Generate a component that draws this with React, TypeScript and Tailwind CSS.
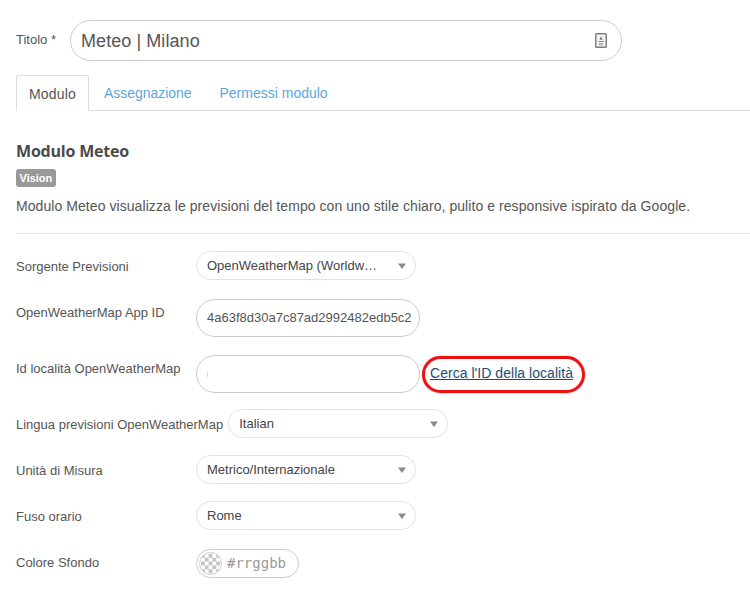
import React from "react";

function Caret() {
  return (
    <svg width="8" height="6" viewBox="0 0 8 6" className="absolute right-[9px] top-[11px]">
      <path d="M0 0.5h8L4 6z" fill="#8a8a8a" />
    </svg>
  );
}

function Select({ text, width }: { text: string; width: string }) {
  return (
    <div className={`relative h-[29px] ${width} shrink-0 rounded-[15px] border border-[#e2e2e2] bg-white pl-[10px] text-[13px] leading-[28px] text-[#444]`}>
      {text}
      <Caret />
    </div>
  );
}

function Label({ text, top }: { text: string; top: string }) {
  return (
    <div className={`min-w-[180px] pr-[5px] ${top} text-[13px] leading-[18px] text-[#555] whitespace-nowrap`}>{text}</div>
  );
}

function Row({ mt, children }: { mt: string; children: React.ReactNode }) {
  return <div className={`flex items-start ${mt}`}>{children}</div>;
}

function Checker() {
  const cells = [];
  for (let y = 0; y < 5; y++) {
    for (let x = 0; x < 5; x++) {
      if ((x + y) % 2 === 0) cells.push(<rect key={`${x}-${y}`} x={1 + x * 4} y={1 + y * 4} width="4" height="4" fill="#c4c4c4" />);
    }
  }
  return (
    <svg width="23" height="23" viewBox="0 0 22 22" className="shrink-0 rounded-full border border-[#ccc] bg-white">
      {cells}
    </svg>
  );
}

export default function App() {
  return (
    <div className="h-[590px] w-[750px] overflow-hidden bg-white font-['Liberation_Sans',Arial,sans-serif]">
      <div className="flex items-start pl-4 pt-5">
        <div className="w-[54px] pt-[11px] text-[13px] leading-[18px] text-[#555]">Titolo *</div>
        <div className="flex h-[41px] w-[552px] items-center justify-between rounded-[21px] border border-[#ccc] pl-[10px] pr-[14px] text-[18px] text-[#555]">
          <span className="pt-[2px] tracking-[0.07px]">Meteo | Milano</span>
          <svg width="12" height="15" viewBox="0 0 12 15">
            <rect x="0.75" y="0.75" width="10.5" height="13.5" rx="0.8" fill="#f4f4f4" stroke="#808080" strokeWidth="1.5" />
            <path d="M6 3.2l1.6 3.6H4.4z" fill="#777" />
            <path d="M3.2 8h5.6v1H3.2z" fill="#888" />
            <path d="M3.8 10h4.4v2.4H3.8z" fill="#b5b5b5" />
          </svg>
        </div>
      </div>

      <div className="mt-[14px] ml-4 flex h-[36px] items-stretch border-b border-[#ddd] text-[14px]">
        <div className="-mb-px flex w-[73px] items-center justify-center rounded-t-[3px] border border-[#ddd] border-b-white bg-white pt-[2px] tracking-[0.2px] text-[#555]">Modulo</div>
        <div className="ml-[15px] flex items-center pt-[2px] tracking-[-0.04px] text-[#5ba7dc]">Assegnazione</div>
        <div className="ml-[28px] flex items-center pt-[2px] text-[#5ba7dc]">Permessi modulo</div>
      </div>

      <div className="pl-4">
        <h3 className="mt-[30px] font-['Open_Sans',sans-serif] text-[16px] font-bold leading-[20px] tracking-[-0.2px] text-[#4a4a4a]">Modulo Meteo</h3>
        <div className="mt-[8px] w-fit rounded-[3px] bg-[#999] px-[3.5px] text-[11px] font-bold leading-[18px] text-white">Vision</div>
        <p className="mt-[9px] text-[14px] leading-[20px] tracking-[0.066px] text-[#555]">Modulo Meteo visualizza le previsioni del tempo con uno stile chiaro, pulito e responsive ispirato da Google.</p>
        <div className="mt-[17px] border-t border-[#ebebeb]" />

        <Row mt="mt-[17px]">
          <Label text="Sorgente Previsioni" top="pt-[7px]" />
          <Select text="OpenWeatherMap (Worldw…" width="w-[220px]" />
        </Row>

        <Row mt="mt-[19px]">
          <Label text="OpenWeatherMap App ID" top="pt-[5px]" />
          <div className="flex h-[38px] w-[224px] items-center overflow-hidden rounded-[19px] border border-[#ccc] pl-[10px] text-[13px] text-[#555] whitespace-nowrap">4a63f8d30a7c87ad2992482edb5c2</div>
        </Row>

        <Row mt="mt-[18px]">
          <Label text="Id località OpenWeatherMap" top="pt-[5px]" />
          <div className="flex h-[38px] w-[224px] items-center rounded-[19px] border border-[#ccc] pl-[10px]">
            <span className="h-[6px] w-px bg-[#ddd]" />
          </div>
          <a className="ml-[2px] mt-[1px] flex h-[37px] w-[163px] items-center rounded-[19px] border-[3px] border-[#f01010] pb-[2px] pl-[5px] text-[14px] tracking-[0.04px] text-[#1d4f76] underline shadow-[0_0_1px_#f01010]">Cerca l'ID della località</a>
        </Row>

        <Row mt="mt-[16px]">
          <div className="pr-[5px] pt-[7px] text-[13px] leading-[18px] text-[#555] whitespace-nowrap">Lingua previsioni OpenWeatherMap</div>
          <Select text="Italian" width="w-[220px]" />
        </Row>

        <Row mt="mt-[17px]">
          <Label text="Unità di Misura" top="pt-[7px]" />
          <Select text="Metrico/Internazionale" width="w-[220px]" />
        </Row>

        <Row mt="mt-[17px]">
          <Label text="Fuso orario" top="pt-[7px]" />
          <Select text="Rome" width="w-[220px]" />
        </Row>

        <Row mt="mt-[19px]">
          <Label text="Colore Sfondo" top="pt-[5px]" />
          <div className="flex h-[29px] w-[103px] items-center gap-[5px] rounded-[15px] border border-[#ccc] pl-[2px]">
            <Checker />
            <span className="font-['DejaVu_Sans_Mono',monospace] text-[14px] text-[#999]">#rrggbb</span>
          </div>
        </Row>
      </div>
    </div>
  );
}
